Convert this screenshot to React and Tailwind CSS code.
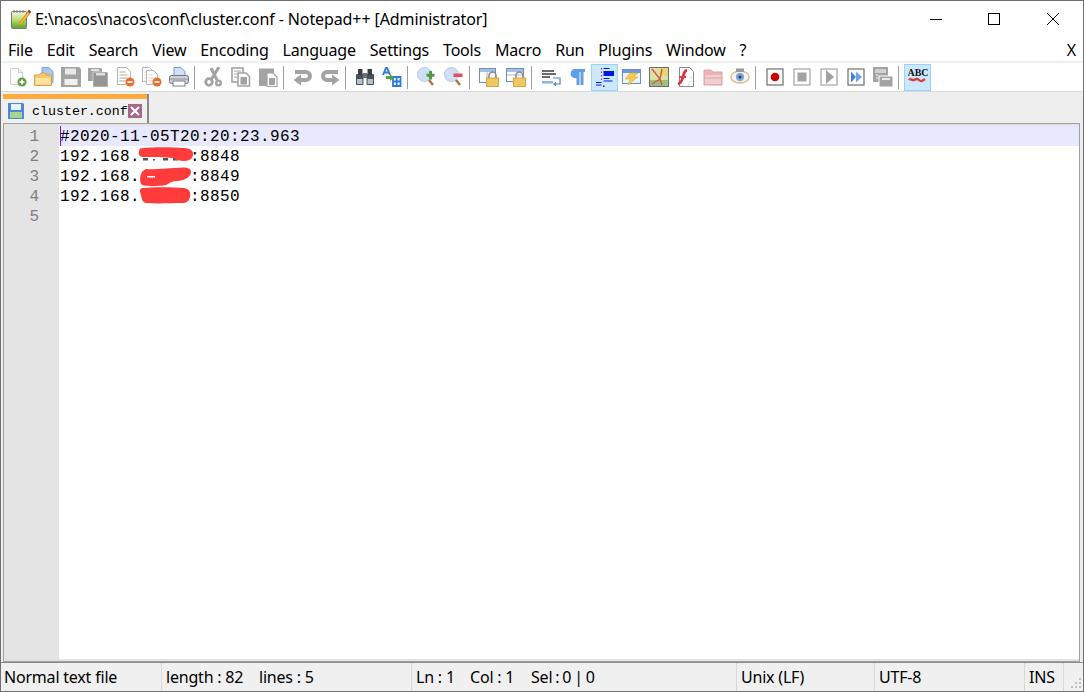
import React from 'react';

const menus = ['File', 'Edit', 'Search', 'View', 'Encoding', 'Language', 'Settings', 'Tools', 'Macro', 'Run', 'Plugins', 'Window', '?'];

const G = '#a3a3a3';

const Svg = ({ children, size = 20 }) => (
  <svg width={size} height={size} viewBox="0 0 20 20" shapeRendering="geometricPrecision">{children}</svg>
);

const Floppy = ({ x = 0, y = 0, s = 1, fill = G }) => (
  <g transform={`translate(${x} ${y}) scale(${s})`}>
    <path d="M0 0h18l2 2v18H0z" fill={fill} />
    <rect x="4" y="1.500" width="11" height="6" fill="#e8e8e8" />
    <rect x="3.500" y="12" width="13" height="6" fill="#f0f0f0" />
  </g>
);

const PageLines = ({ x = 0, y = 0, w = 12, h = 17, line = '#a8a8a8' }) => (
  <g transform={`translate(${x} ${y})`}>
    <path d={`M0.500 0.500h${w - 4}l4 4v${h - 5}h-${w}z`} fill="#fff" stroke="#b5b5b5" />
    <path d={`M2.500 5h${w - 7}M2.500 8h${w - 5}M2.500 11h${w - 5}M2.500 14h${w - 5}`} stroke={line} />
  </g>
);

const Badge = ({ color, minus = true }) => (
  <g>
    <circle cx="15" cy="15" r="4.500" fill={color} />
    <path d="M12.500 15h5" stroke="#fff" strokeWidth="1.600" />
    {!minus && <path d="M15 12.500v5" stroke="#fff" strokeWidth="1.600" />}
  </g>
);

const Lens = ({ children }) => (
  <g>
    <circle cx="7.500" cy="7.500" r="7" fill="#cfe0f5" stroke="#b4cbe8" />
    <path d="M12 13l4 5" stroke="#a9794a" strokeWidth="2.600" />
    {children}
  </g>
);

const Lock = () => (
  <g>
    <rect x="0.500" y="1.500" width="16" height="14" fill="#fff" stroke="#6d8fc0" />
    <rect x="1" y="2" width="15" height="3" fill="#a9c0e0" />
    <path d="M8 1.500v14" stroke="#9db6d8" />
    <path d="M10 11V8.500a3.500 3.500 0 0 1 7 0V11" fill="none" stroke="#8c8c8c" strokeWidth="1.600" />
    <rect x="7.500" y="11" width="12" height="8.500" fill="#f0c862" stroke="#d6a640" />
  </g>
);

const MacroBox = ({ children, stroke = '#8a8a8a' }) => (
  <g>
    <rect x="2" y="2" width="16" height="16" fill="#fff" stroke={stroke} strokeWidth="1.200" />
    {children}
  </g>
);

const icons = {
  newFile: (
    <Svg>
      <path d="M3.500 1.500h8l4 4v12h-12z" fill="#fbfbfb" stroke="#cfcfcf" />
      <path d="M11.500 1.500v4h4" fill="#eee" stroke="#cfcfcf" />
      <Badge color="#5f9e45" minus={false} />
    </Svg>
  ),
  open: (
    <Svg>
      <path d="M8 0.500h7l4 4v11H8z" fill="#a9c8f0" stroke="#7fa5dc" />
      <path d="M0.500 8h5l1-2h5l1 2h5v10.500H0.500z" fill="#f6c868" stroke="#dca04a" />
      <rect x="1.500" y="11" width="15" height="6.500" fill="#fbe3a4" />
    </Svg>
  ),
  save: <Svg><Floppy /></Svg>,
  saveAll: (
    <Svg>
      <path d="M0 1h13l1 1v12H0z" fill={G} />
      <path d="M3 2h8v2H3z" fill="#e0e0e0" />
      <path d="M5 5h14l1 1v14H5z" fill="#969696" stroke="#fff" strokeWidth="0.500" />
      <path d="M8 6h9v2.500H8z" fill="#e0e0e0" />
    </Svg>
  ),
  close: (
    <Svg>
      <PageLines x={2} y={0} w={13} h={18} />
      <Badge color="#e8702a" />
    </Svg>
  ),
  closeAll: (
    <Svg>
      <PageLines x={0} y={0} w={11} h={15} line="#d0d0d0" />
      <PageLines x={4} y={3} w={11} h={15} line="#d0d0d0" />
      <Badge color="#e8702a" />
    </Svg>
  ),
  print: (
    <Svg>
      <path d="M5 0.500h7l4 4V9H5z" fill="#cfe0f7" stroke="#6f9bd8" />
      <rect x="0.500" y="8.500" width="19" height="8" rx="2" fill="#cfd3d8" stroke="#6f7780" />
      <rect x="4" y="14" width="12" height="5" fill="#fff" stroke="#7a828a" />
      <path d="M1 12h18" stroke="#8a929a" />
    </Svg>
  ),
  cut: (
    <Svg>
      <path d="M15 0L7 13M7 1l6 12" stroke={G} strokeWidth="3" fill="none" />
      <circle cx="5" cy="15" r="3.300" fill="none" stroke={G} strokeWidth="2.800" />
      <circle cx="14.500" cy="16" r="2.400" fill="none" stroke={G} strokeWidth="2.400" />
    </Svg>
  ),
  copy: (
    <Svg>
      <rect x="1" y="1" width="11" height="14" fill="#fff" stroke={G} strokeWidth="1.600" />
      <path d="M3 4h7M3 7h3M3 10h3" stroke={G} />
      <path d="M7 6h8l3.500 3.500V19H7z" fill="#fff" stroke={G} strokeWidth="1.600" />
      <rect x="9.500" y="10" width="6.500" height="7.500" fill={G} />
    </Svg>
  ),
  paste: (
    <Svg>
      <rect x="1" y="1.500" width="15" height="17.500" fill={G} />
      <path d="M9 6h6l4 4v9.500H9z" fill="#fff" stroke={G} strokeWidth="1.200" />
      <rect x="11" y="11" width="6" height="7" fill={G} />
    </Svg>
  ),
  undo: (
    <Svg>
      <path d="M2 5h11a4 4 0 0 1 0 8H7" fill="none" stroke={G} strokeWidth="4" />
      <path d="M8 7.500V18.500L0.500 13z" fill={G} />
    </Svg>
  ),
  redo: (
    <Svg>
      <path d="M18 5H7a4 4 0 0 0 0 8h6" fill="none" stroke={G} strokeWidth="4" />
      <path d="M12 7.500V18.500L19.500 13z" fill={G} />
    </Svg>
  ),
  find: (
    <Svg>
      <rect x="1" y="7" width="7.500" height="11" rx="1" fill="#4a4f57" />
      <rect x="11.500" y="7" width="7.500" height="11" rx="1" fill="#4a4f57" />
      <rect x="3" y="2" width="4.500" height="6" fill="#3a3e45" />
      <rect x="12.500" y="2" width="4.500" height="6" fill="#3a3e45" />
      <rect x="8" y="6" width="4" height="5" fill="#6a7079" />
      <rect x="2" y="12" width="5.500" height="5" fill="#b9c2cc" />
      <rect x="12.500" y="12" width="5.500" height="5" fill="#b9c2cc" />
    </Svg>
  ),
  replace: (
    <Svg>
      <path d="M1 8l3-7h1l3 7M2.500 5.500h4" fill="none" stroke="#2f7ad6" strokeWidth="1.900" />
      <path d="M11 10h7.500v9H11zM11 14.500h7.500M14.700 10v9" fill="none" stroke="#2f7ad6" strokeWidth="1.800" />
      <path d="M4 9h4V7l4 3.500L8 14v-2H4z" fill="#4fa04a" />
    </Svg>
  ),
  zoomIn: (
    <Svg>
      <Lens><path d="M13.500 4v8.500M9.500 8.200h8" stroke="#4f9a45" strokeWidth="3" /></Lens>
    </Svg>
  ),
  zoomOut: (
    <Svg>
      <Lens><rect x="9.500" y="6.500" width="9" height="3.500" fill="#e2505a" /></Lens>
    </Svg>
  ),
  sync1: <Svg><Lock /></Svg>,
  sync2: (
    <Svg>
      <rect x="0.500" y="1.500" width="17" height="13" fill="#fff" stroke="#6d8fc0" />
      <rect x="1" y="2" width="16" height="3" fill="#a9c0e0" />
      <path d="M1 8h17" stroke="#9db6d8" />
      <path d="M10 11V8.500a3.500 3.500 0 0 1 7 0V11" fill="none" stroke="#8c8c8c" strokeWidth="1.600" />
      <rect x="7.500" y="11" width="12" height="8.500" fill="#f0c862" stroke="#d6a640" />
    </Svg>
  ),
  wrap: (
    <Svg>
      <path d="M1 4h12M1 7h14M1 10h8" stroke="#3c3c3c" strokeWidth="1.300" />
      <rect x="1" y="14" width="11" height="2.500" fill="#8db4e2" />
      <path d="M12 11h7v6h-6" fill="none" stroke="#4a86d0" strokeWidth="1.200" />
      <path d="M15 14.500l-3 2.500 3 2.500z" fill="#4a86d0" />
    </Svg>
  ),
  para: (
    <Svg>
      <path d="M6 2h11v3h-1.500v13h-3V5h-1v13h-3v-7a4.500 4.500 0 0 1-2.500-9z" fill="#5f9fe6" />
    </Svg>
  ),
  indent: (
    <Svg>
      <path d="M6.500 1v1.500M6.500 4.500V6M6.500 8v1.500M6.500 11.500V13" stroke="#e0203a" strokeWidth="1.200" />
      <path d="M8.500 1.500h6M8.500 11.500h6M8.500 14h9" stroke="#0018e0" strokeWidth="1.200" />
      <rect x="8.500" y="4" width="10.500" height="5" fill="#0018e0" />
      <path d="M1 15.500h5.500M1 18h5.500" stroke="#0018e0" strokeWidth="1.200" />
      <rect x="8" y="18.500" width="1.500" height="1.500" fill="#0018e0" />
    </Svg>
  ),
  bolt: (
    <Svg>
      <rect x="0.500" y="2.500" width="18" height="14" fill="#eef3fb" stroke="#6d8fc0" />
      <rect x="1" y="3" width="17" height="3" fill="#6d9ad6" />
      <path d="M8 6h8l-4 4h4L6 18l2-6H3z" fill="#f2cb52" stroke="#dba933" strokeWidth="0.500" />
    </Svg>
  ),
  map: (
    <Svg>
      <rect x="0.500" y="0.500" width="19" height="19" fill="#d9e2a0" stroke="#6e6e6e" />
      <path d="M1 13h18v6H1z" fill="#9ac27c" />
      <path d="M11 1h8v8h-8z" fill="#e7d577" />
      <path d="M3 2l8 10 2 6M13 2l-2 10-8 5" fill="none" stroke="#d9534f" strokeWidth="1.400" />
    </Svg>
  ),
  func: (
    <Svg>
      <path d="M3.500 0.500h10l4 4v15h-14z" fill="#fff" stroke="#8a8a8a" />
      <path d="M11 3c-3 1-3 3-4 7s-2 6-5 7" fill="none" stroke="#d9343f" strokeWidth="2.800" />
      <path d="M3 10h7" stroke="#d9343f" strokeWidth="1.800" />
      <path d="M15 10v1M14 14v1M12 17h1" stroke="#a5c99a" />
    </Svg>
  ),
  folder: (
    <Svg>
      <path d="M1 3h7l2 2h9v13H1z" fill="#e9b4b6" stroke="#dfa3a6" />
      <rect x="2" y="8" width="16" height="9" fill="#f2cdce" />
      <path d="M2 11h16" stroke="#dca5a8" />
    </Svg>
  ),
  eye: (
    <Svg>
      <ellipse cx="10" cy="10" rx="9.200" ry="6" fill="#f4f4f4" stroke="#dcb77d" strokeWidth="1.300" />
      <rect x="6" y="1.500" width="8" height="3.500" fill="#9a9a9a" />
      <circle cx="10" cy="10" r="4.200" fill="#7ea6d6" />
      <circle cx="10" cy="10" r="1.500" fill="#2b3c55" />
    </Svg>
  ),
  rec: <Svg><MacroBox stroke="#6f6f6f"><circle cx="10" cy="10" r="4.300" fill="#c80000" /></MacroBox></Svg>,
  stop: <Svg><MacroBox stroke={G}><rect x="5.500" y="5.500" width="9" height="9" fill={G} /></MacroBox></Svg>,
  play: <Svg><MacroBox stroke={G}><path d="M7 3v14l8-7z" fill={G} /></MacroBox></Svg>,
  multi: (
    <Svg>
      <MacroBox stroke="#6f6f6f">
        <path d="M5 4.500v11l5-5.500z" fill="#3f7fe0" />
        <path d="M10 4.500v11l6-5.500z" fill="#6ea4ee" />
      </MacroBox>
    </Svg>
  ),
  saveMacro: (
    <Svg>
      <rect x="0" y="0" width="15" height="15" fill={G} />
      <path d="M2 3h11M2 5h11M3 8h2M3 11h2" stroke="#fff" />
      <rect x="6" y="9" width="14" height="11" fill={G} stroke="#fff" />
      <path d="M9 12h8" stroke="#fff" strokeWidth="1.500" />
    </Svg>
  ),
  abc: (
    <Svg>
      <text x="10" y="9" textAnchor="middle" fontSize="10" fontWeight="700" fontFamily="'Liberation Serif', serif" fill="#111">ABC</text>
      <path d="M1 13c2-2.500 3 1 5 0s3-2 5 0 3 1 6-1" fill="none" stroke="#d9403a" strokeWidth="2.400" />
    </Svg>
  ),
};

const groups = [
  ['newFile', 'open', 'save', 'saveAll', 'close', 'closeAll', 'print'],
  ['cut', 'copy', 'paste'],
  ['undo', 'redo'],
  ['find', 'replace'],
  ['zoomIn', 'zoomOut'],
  ['sync1', 'sync2'],
  ['wrap', 'para', 'indent', 'bolt', 'map', 'func', 'folder', 'eye'],
  ['rec', 'stop', 'play', 'multi', 'saveMacro'],
  ['abc'],
];

const activeIcons = ['indent', 'abc'];

function Toolbar() {
  return (
    <div className="flex h-[28px] items-center bg-white pl-[2px]">
      {groups.map((group, i) => (
        <React.Fragment key={i}>
          {i > 0 && (
            <div className="flex h-[23px] w-[8px] pl-[2px]">
              <div className="h-full w-px bg-[#a0a0a0]" />
            </div>
          )}
          {group.map(name => (
            <div
              key={name}
              className={`flex h-[27px] w-[27px] items-center justify-center ${activeIcons.includes(name) ? 'border border-[#99d1ff] bg-[#cce8ff]' : ''}`}
            >
              {icons[name]}
            </div>
          ))}
        </React.Fragment>
      ))}
    </div>
  );
}

function Blob({ d, dash, under }) {
  return (
    <span className="relative inline-block h-[20px] w-[50px] align-top">
      <svg className="absolute left-0 top-0 overflow-visible" width="50" height="20" viewBox="0 0 50 20">
        {under && <path d="M3 12h5v2.500H3zM13 13h2v1.500h-2zM23 12h5v2.500h-5zM33 12h5v2.500h-5z" fill="#555" />}
        <path d={d} fill="#ff3b3b" />
        {dash && <rect x="7" y="10" width="8" height="1.500" fill="#fff" />}
      </svg>
    </span>
  );
}

const lines = [
  { n: 1, text: '#2020-11-05T20:20:23.963' },
  { n: 2, pre: '192.168.', post: ':8848', under: true, blob: 'M0 2.500C10 1 30 1 44 2c6 .5 9 2 9 6s-3 7-9 7c-4 0-8-1-11-3-8-1-22-1-28-1-5 0-8-1-5-9z' },
  { n: 3, pre: '192.168.', post: ':8849', dash: true, blob: 'M6 3c10 1 18-1 30-1 8-1 15-1 15 4 0 5-6 8-13 9-6 0-8 2-12 4-6 1-18 2-24 0-3-2-3-14 4-16z' },
  { n: 4, pre: '192.168.', post: ':8850', blob: 'M2 2c10-1 30-1 42 0 6 1 7 5 6 9-1 4-3 6-8 6-10 0-24 1-36 0-5-1-4-6-5-8-1-3-2-6 1-7z' },
  { n: 5, text: '' },
];

function Editor() {
  return (
    <div className="flex min-h-0 flex-1 border border-[#a0a0a0] bg-white">
      <div className="flex flex-1 border-t-2 border-b-2 border-[#e3e3e3]">
        <div className="w-[55px] shrink-0 bg-[#e4e4e4] pr-[20px] text-right text-[#808080]">
          {lines.map(l => (
            <div key={l.n} className="h-[20px] font-['Liberation_Mono',monospace] text-[16px] leading-[22px]">{l.n}</div>
          ))}
        </div>
        <div className="flex-1 pl-px font-['Liberation_Mono',monospace] text-[16px] leading-[22px] tracking-[0.4px] text-black">
          {lines.map(l => (
            <div key={l.n} className={`h-[20px] whitespace-pre ${l.n === 1 ? 'bg-[#e8e8ff] shadow-[inset_1px_0_0_#8000ff]' : ''}`}>
              {l.blob ? (
                <>
                  {l.pre}
                  <Blob d={l.blob} dash={l.dash} under={l.under} />
                  {l.post}
                </>
              ) : l.text}
            </div>
          ))}
        </div>
      </div>
    </div>
  );
}

function StatusCell({ width, children, last }) {
  return (
    <div className={`flex h-full items-center pl-[4px] ${last ? '' : 'border-r border-[#d9d9d9]'}`} style={{ width }}>
      {children}
    </div>
  );
}

export default function App() {
  return (
    <div className="flex h-[692px] w-[1084px] flex-col overflow-hidden border border-[#707070] bg-[#eeeeee] font-['Noto_Sans',sans-serif] text-[16px] text-black">
      {/* title bar */}
      <div className="flex h-[36px] shrink-0 items-center bg-white">
        <div className="ml-[9px] flex w-[25px] shrink-0">
          <svg width="22" height="22" viewBox="0 0 22 22">
            <defs>
              <linearGradient id="pad" x1="0" y1="0" x2="0" y2="1">
                <stop offset="0" stopColor="#f4f7e8" />
                <stop offset="0.500" stopColor="#b8dc6c" />
                <stop offset="1" stopColor="#4fa52e" />
              </linearGradient>
            </defs>
            <rect x="1.500" y="3.500" width="15" height="17" rx="1" fill="url(#pad)" stroke="#7b7b7b" />
            <path d="M4 2v3M7 2v3M10 2v3M13 2v3" stroke="#8a8a8a" strokeWidth="1.200" />
            <path d="M19 2l-9 12-2 4 4-2 9-12z" fill="#f2b632" stroke="#b7791f" strokeWidth="0.600" />
            <path d="M19 2l2 2-1.500 1.500-2-2z" fill="#b02a2a" />
          </svg>
        </div>
        <span className="tracking-[-0.1px]">E:\nacos\nacos\conf\cluster.conf - Notepad++ [Administrator]</span>
        <div className="ml-auto mr-px flex h-full items-center">
          <div className="flex h-full w-[56px] items-center justify-center">
            <div className="h-px w-[12px] bg-black" />
          </div>
          <div className="flex h-full w-[59px] items-center justify-center">
            <div className="h-[12px] w-[12px] border border-black" />
          </div>
          <div className="flex h-full w-[59px] items-center justify-center">
            <svg width="12" height="12" viewBox="0 0 12 12"><path d="M0 0l12 12M12 0L0 12" stroke="#000" /></svg>
          </div>
        </div>
      </div>

      {/* menu bar */}
      <div className="flex h-[24px] shrink-0 items-center gap-[14px] bg-white pl-[7px] pr-[7px] pt-[2px] tracking-[-0.2px]">
        {menus.map(m => <span key={m}>{m}</span>)}
        <span className="ml-auto">X</span>
      </div>
      <div className="h-[2px] shrink-0 bg-[#f0f0f0]" />

      <Toolbar />
      <div className="h-px shrink-0 bg-[#d9d9d9]" />

      {/* tab bar */}
      <div className="flex h-[31px] shrink-0 items-end pl-[2px] pt-[2px]">
        <div className="flex h-full w-[146px] flex-col border-r-2 border-[#8a8a8a] bg-[#f0f0f0]">
          <div className="h-[5px] shrink-0 bg-[#ffaa3c]" />
          <div className="flex flex-1 items-center pl-[5px]">
            <svg width="16" height="16" viewBox="0 0 16 16">
              <path d="M0 0h15l1 1v15H0z" fill="#4f87d8" />
              <rect x="3" y="1" width="10" height="6" fill="#e9f1fb" />
              <rect x="2" y="9" width="12" height="6" fill="#a6d48a" />
            </svg>
            <span className="ml-[8px] w-[96px] pt-[2px] font-['Liberation_Mono',monospace] text-[13.300px]">cluster.conf</span>
            <div className="flex h-[14px] w-[14px] items-center justify-center bg-[#a5688c]">
              <svg width="10" height="10" viewBox="0 0 10 10"><path d="M1 1l8 8M9 1l-8 8" stroke="#fff" strokeWidth="2" /></svg>
            </div>
          </div>
        </div>
      </div>

      {/* editor */}
      <div className="flex min-h-0 flex-1 flex-col pl-[2px] pr-[3px]">
        <Editor />
      </div>

      {/* status bar */}
      <div className="flex h-[29px] shrink-0 items-center border-t border-[#8a8a8a] bg-[#f0f0f0] tracking-[-0.2px]">
        <StatusCell width={161}><span className="-ml-px">Normal text file</span></StatusCell>
        <StatusCell width={250}>
          <span className="w-[93px]">length : 82</span>
          <span>lines : 5</span>
        </StatusCell>
        <StatusCell width={325}>
          <span className="w-[54px]">Ln : 1</span>
          <span className="w-[61px]">Col : 1</span>
          <span className="[word-spacing:-1px]">Sel : 0 | 0</span>
        </StatusCell>
        <StatusCell width={138}>Unix (LF)</StatusCell>
        <StatusCell width={150}>UTF-8</StatusCell>
        <StatusCell width={39}>INS</StatusCell>
        <div className="flex h-full flex-1 items-end justify-end pb-[1px] pr-[1px]">
          <svg width="12" height="12" viewBox="0 0 12 12" fill="#c0c0c0">
            <rect x="9" y="0" width="2" height="2" />
            <rect x="5" y="4" width="2" height="2" />
            <rect x="9" y="4" width="2" height="2" />
            <rect x="1" y="8" width="2" height="2" />
            <rect x="5" y="8" width="2" height="2" />
            <rect x="9" y="8" width="2" height="2" />
          </svg>
        </div>
      </div>
    </div>
  );
}
